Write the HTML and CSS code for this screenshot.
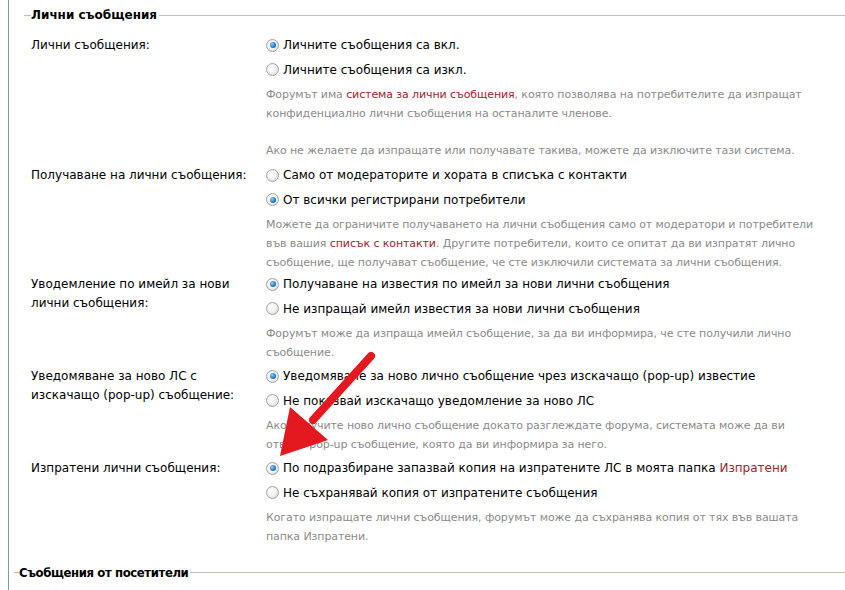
FILE: index.html
```html
<!DOCTYPE html>
<html lang="bg">
<head>
<meta charset="utf-8">
<title>Лични съобщения</title>
<link rel="stylesheet" href="styles.css">
</head>
<body>
<div class="page">
  <section class="group">
    <div class="legend"><span class="legend-text">Лични съобщения</span><span class="legend-rule"></span></div>

    <div class="row first">
      <div class="label">Лични съобщения:</div>
      <div class="field">
        <div class="opt"><span class="radio on"></span><span>Личните съобщения са вкл.</span></div>
        <div class="opt"><span class="radio"></span><span>Личните съобщения са изкл.</span></div>
        <p class="desc">Форумът има <a href="#">система за лични съобщения</a>, която позволява на потребителите да изпращат конфиденциално лични съобщения на останалите членове.</p>
        <p class="desc gap">Ако не желаете да изпращате или получавате такива, можете да изключите тази система.</p>
      </div>
    </div>

    <div class="row second-row">
      <div class="label">Получаване на лични съобщения:</div>
      <div class="field">
        <div class="opt"><span class="radio"></span><span>Само от модераторите и хората в списъка с контакти</span></div>
        <div class="opt"><span class="radio on"></span><span>От всички регистрирани потребители</span></div>
        <p class="desc">Можете да ограничите получаването на лични съобщения само от модератори и потребители във вашия <a href="#">списък с контакти</a>. Другите потребители, които се опитат да ви изпратят лично съобщение, ще получават съобщение, че сте изключили системата за лични съобщения.</p>
      </div>
    </div>

    <div class="row tight">
      <div class="label">Уводемление по имейл за нови лични съобщения:</div>
      <div class="field">
        <div class="opt"><span class="radio on"></span><span>Получаване на известия по имейл за нови лични съобщения</span></div>
        <div class="opt"><span class="radio"></span><span>Не изпращай имейл известия за нови лични съобщения</span></div>
        <p class="desc">Форумът може да изпраща имейл съобщение, за да ви информира, че сте получили лично съобщение.</p>
      </div>
    </div>

    <div class="row">
      <div class="label">Уведомяване за ново ЛС с изскачащо (pop-up) съобщение:</div>
      <div class="field">
        <div class="opt"><span class="radio on"></span><span>Уведомяване за ново лично съобщение чрез изскачащо (pop-up) известие</span></div>
        <div class="opt"><span class="radio"></span><span>Не показвай изскачащо уведомление за ново ЛС</span></div>
        <p class="desc">Ако получите ново лично съобщение докато разглеждате форума, системата може да ви отвори pop-up съобщение, която да ви информира за него.</p>
      </div>
    </div>

    <div class="row">
      <div class="label">Изпратени лични съобщения:</div>
      <div class="field">
        <div class="opt"><span class="radio on"></span><span>По подразбиране запазвай копия на изпратените ЛС в моята папка <a href="#">Изпратени</a></span></div>
        <div class="opt"><span class="radio"></span><span>Не съхранявай копия от изпратените съобщения</span></div>
        <p class="desc">Когато изпращате лични съобщения, форумът може да съхранява копия от тях във вашата папка Изпратени.</p>
      </div>
    </div>
  </section>

  <section class="group second">
    <div class="legend"><span class="legend-text narrow">Съобщения от посетители</span><span class="legend-rule"></span></div>
  </section>

  <svg class="arrow" width="845" height="590" viewBox="0 0 845 590" aria-hidden="true">
    <line x1="371" y1="356" x2="313" y2="420" stroke="#e3191f" stroke-width="8" stroke-linecap="round"/>
    <polygon points="280,456 290,407 328,440" fill="#e3191f"/>
  </svg>
</div>
</body>
</html>
```

FILE: styles.css
```css
html, body {
  margin: 0;
  padding: 0;
  background: #ffffff;
}

body {
  font-family: "DejaVu Sans", Verdana, sans-serif;
  font-size: 12px;
  color: #000;
}

.page {
  position: relative;
  margin-left: 8px;
  border-left: 1px solid #8797a9;
  min-height: 590px;
  width: 836px;
  padding-top: 1px;
}

.group {
  padding-left: 15px;
}

.legend {
  display: flex;
  align-items: center;
  height: 18px;
  margin-top: 5px;
}

.legend::before {
  content: "";
  width: 7px;
  height: 1px;
  background: #c6bdb4;
  flex: none;
}

.legend-rule {
  flex: 1 1 auto;
  height: 1px;
  background: #c6bdb4;
  margin-left: 2px;
}

.legend-text {
  font-weight: bold;
  font-size: 12px;
  white-space: nowrap;
}

.row {
  display: grid;
  grid-template-columns: 235px 1fr;
  padding-left: 7px;
  margin-top: 2px;
}

.row.first {
  margin-top: 9px;
}

.row.second-row {
  margin-top: 3px;
}

.row.tight {
  margin-top: 0;
}

.label {
  line-height: 19px;
  padding-top: 3px;
  padding-right: 4px;
}

.field {
  padding-right: 31px;
}

.opt {
  display: flex;
  align-items: center;
  height: 24.5px;
  white-space: nowrap;
}

.radio {
  width: 11px;
  height: 11px;
  border-radius: 50%;
  border: 1px solid #a3a3a3;
  background: radial-gradient(circle at 40% 40%, #ffffff 0%, #f2f2f2 45%, #d0d0d0 100%);
  margin-right: 4px;
  flex: none;
  position: relative;
  box-sizing: content-box;
}

.radio.on::after {
  content: "";
  position: absolute;
  left: 2.5px;
  top: 2.5px;
  width: 6px;
  height: 6px;
  border-radius: 50%;
  background: radial-gradient(circle at 35% 35%, #8fd2ff 0%, #2a86d4 50%, #0b4a8c 100%);
}

.desc {
  margin: 3px 0 0 0;
  font-size: 11px;
  line-height: 19px;
  color: #8a8a8a;
  letter-spacing: -0.1px;
}

.desc.gap {
  margin-top: 18px;
}

a {
  color: #a1232b;
  text-decoration: none;
}

.second {
  padding-left: 5px;
  margin-top: 17px;
}

.second .legend {
  margin-top: 0;
}

.second .legend::before {
  width: 5px;
}

.legend-text.narrow {
  font-family: "DejaVu Sans Condensed", "Liberation Sans Narrow", sans-serif;
  font-size: 13px;
  letter-spacing: -0.4px;
}

.arrow {
  position: absolute;
  left: -9px;
  top: 0;
  pointer-events: none;
}
```
